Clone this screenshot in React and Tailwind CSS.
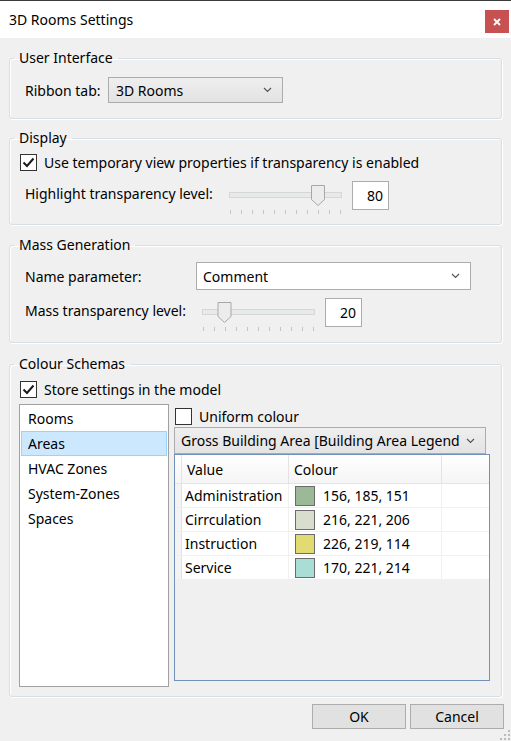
import React from "react";

function Check({ checked }) {
  return (
    <span className="w-[17px] h-[17px] border border-[#333333] bg-white flex items-center justify-center shrink-0">
      {checked && (
        <svg width="13" height="13" viewBox="0 0 13 13">
          <path d="M1.5 6.5 L5 10 L11.5 2.5" fill="none" stroke="#1a1a1a" strokeWidth="2" />
        </svg>
      )}
    </span>
  );
}

function Chevron() {
  return (
    <svg width="9" height="6" viewBox="0 0 9 6" className="shrink-0">
      <path d="M1 1 L4.5 4.5 L8 1" fill="none" stroke="#555" strokeWidth="1.2" />
    </svg>
  );
}

function Slider({ width, pos }) {
  const ticks = Array.from({ length: 11 }, (_, i) => 1.5 + (i * (width - 3)) / 10);
  return (
    <svg width={width} height="31" className="block shrink-0">
      <rect x="0.5" y="8.5" width={width - 1} height="5" fill="#e7eaea" stroke="#d6d6d6" />
      {ticks.map((x, i) => (
        <line key={i} x1={x} x2={x} y1="26" y2="30" stroke="#c4c4c4" />
      ))}
      <path
        d={`M${pos - 6.5} 1.5 h13 v14 l-6.5 6 l-6.5 -6 z`}
        fill="#ececec"
        stroke="#a8a8a8"
      />
    </svg>
  );
}

function NumBox({ value }) {
  return (
    <div className="w-[37px] h-[29px] bg-white border border-[#acacac] flex items-center justify-end pr-[5px] shrink-0">
      {value}
    </div>
  );
}

function Group({ title, className, children }) {
  return (
    <fieldset className={`border border-[#d5dfe5] rounded-[3px] shadow-[inset_1px_1px_0_white,1px_1px_0_white] ${className}`}>
      <legend className="ml-[4px] px-[5px] leading-[18px]">{title}</legend>
      {children}
    </fieldset>
  );
}

const rows = [
  ["Administration", "156, 185, 151", "bg-[#9cb997]"],
  ["Cirrculation", "216, 221, 206", "bg-[#d8ddce]"],
  ["Instruction", "226, 219, 114", "bg-[#e2db72]"],
  ["Service", "170, 221, 214", "bg-[#aaddd6]"],
];

const items = ["Rooms", "Areas", "HVAC Zones", "System-Zones", "Spaces"];

export default function App() {
  return (
    <div className="w-[511px] h-[741px] bg-[#f0f0f0] flex flex-col relative overflow-hidden font-['Noto_Sans','Liberation_Sans',sans-serif] text-[14px] text-black">
      <div className="h-px bg-[#3a3a3a]" />
      <div className="h-[37px] bg-white flex items-start justify-between">
        <span className="pl-[9px] pt-[9px] leading-[20px]">3D Rooms Settings</span>
        <div className="mt-[9px] mr-[2px] w-[24px] h-[23px] bg-[#c75050] flex items-center justify-center">
          <svg width="8" height="8" viewBox="0 0 8 8">
            <path d="M1 1 L7 7 M7 1 L1 7" stroke="white" strokeWidth="1.8" />
          </svg>
        </div>
      </div>

      <div className="px-[9px] flex flex-col">
        <Group title="User Interface" className="mt-[11px] h-[70px]">
          <div className="flex items-center pl-[15px] pt-[10px]">
            <span className="w-[83px]">Ribbon tab:</span>
            <div className="w-[175px] h-[26px] border border-[#acacac] bg-gradient-to-b from-[#efefef] to-[#e3e3e3] flex items-center justify-between pl-[7px] pr-[10px]">
              <span>3D Rooms</span>
              <Chevron />
            </div>
          </div>
        </Group>

        <Group title="Display" className="mt-[10px] h-[96px]">
          <div className="flex items-center gap-[7px] pl-[10px] h-[20px] mt-[5px]">
            <Check checked />
            <span>Use temporary view properties if transparency is enabled</span>
          </div>
          <div className="flex items-start pl-[15px] mt-[9px]">
            <span className="w-[204px] mt-[4px] leading-[18px]">Highlight transparency level:</span>
            <div className="mt-[3px]">
              <Slider width={113} pos={89} />
            </div>
            <div className="ml-[10px]">
              <NumBox value="80" />
            </div>
          </div>
        </Group>

        <Group title="Mass Generation" className="mt-[11px] h-[107px]">
          <div className="flex items-center pl-[15px] mt-[8px]">
            <span className="w-[171px]">Name parameter:</span>
            <div className="w-[275px] h-[28px] border border-[#acacac] bg-white flex items-center justify-between pl-[6px] pr-[10px]">
              <span>Comment</span>
              <Chevron />
            </div>
          </div>
          <div className="flex items-start pl-[15px] mt-[8px]">
            <span className="w-[177px] mt-[4px] leading-[18px]">Mass transparency level:</span>
            <div className="mt-[3px]">
              <Slider width={113} pos={22.5} />
            </div>
            <div className="ml-[10px]">
              <NumBox value="20" />
            </div>
          </div>
        </Group>

        <Group title="Colour Schemas" className="mt-[12px] h-[342px]">
          <div className="flex items-center gap-[7px] pl-[10px] h-[20px] mt-[6px]">
            <Check checked />
            <span>Store settings in the model</span>
          </div>
          <div className="flex gap-[5px] pl-[9px] mt-[5px]">
            <div className="w-[150px] h-[283px] bg-white border border-[#a0a0a0] p-px flex flex-col">
              {items.map((it) => (
                <div
                  key={it}
                  className={`h-[25px] flex items-center pl-[6px] border ${
                    it === "Areas" ? "bg-[#cce8ff] border-[#99d1ff]" : "border-transparent"
                  }`}
                >
                  {it}
                </div>
              ))}
            </div>
            <div className="w-[316px] flex flex-col">
              <div className="flex items-center gap-[7px] h-[21px] mt-[2px] pl-px">
                <Check />
                <span>Uniform colour</span>
              </div>
              <div className="w-[312px] h-[27px] border border-[#acacac] bg-gradient-to-b from-[#efefef] to-[#e3e3e3] flex items-center justify-between pl-[6px] pr-[10px] overflow-hidden">
                <span className="whitespace-nowrap overflow-hidden w-[279px]">Gross Building Area [Building Area Legend]</span>
                <Chevron />
              </div>
              <div className="h-[227px] border border-[#7391b8] bg-[#f0f0f0] flex flex-col">
                <div className="flex h-[29px] bg-gradient-to-b from-white to-[#f5f5f5] border-b border-[#e3e3e3]">
                  <div className="w-[7px] border-r border-[#e3e3e3]" />
                  <div className="w-[107px] flex items-center pl-[5px] border-r border-[#e3e3e3]">Value</div>
                  <div className="w-[153px] flex items-center pl-[5px] border-r border-[#e3e3e3]">Colour</div>
                  <div className="flex-1" />
                </div>
                {rows.map(([name, rgb, sw]) => (
                  <div key={name} className="flex h-[24px] bg-white border-b border-[#f0f0f0]">
                    <div className="w-[7px] bg-[#f3f3f3] border-r border-[#e3e3e3]" />
                    <div className="w-[107px] flex items-center pl-[3px] border-r border-[#f0f0f0] whitespace-nowrap">
                      {name}
                    </div>
                    <div className="w-[153px] flex items-center pl-[6px] gap-[8px] border-r border-[#f0f0f0]">
                      <span className={`w-[20px] h-[20px] border border-[#6b6b6b] ${sw}`} />
                      <span>{rgb}</span>
                    </div>
                    <div className="flex-1" />
                  </div>
                ))}
              </div>
            </div>
          </div>
        </Group>
      </div>

      <div className="flex justify-end gap-[4px] pr-[7px] mt-[7px]">
        <button className="w-[94px] h-[25px] bg-[#e1e1e1] border border-[#adadad] flex items-center justify-center">OK</button>
        <button className="w-[94px] h-[25px] bg-[#e1e1e1] border border-[#adadad] flex items-center justify-center">Cancel</button>
      </div>

      <svg width="12" height="12" viewBox="0 0 12 12" className="absolute right-[1px] bottom-[1px]">
        {[[10, 2], [10, 6], [6, 6], [10, 10], [6, 10], [2, 10]].map(([x, y], i) => (
          <rect key={i} x={x} y={y} width="2" height="2" fill="#bcbcbc" />
        ))}
      </svg>
    </div>
  );
}
